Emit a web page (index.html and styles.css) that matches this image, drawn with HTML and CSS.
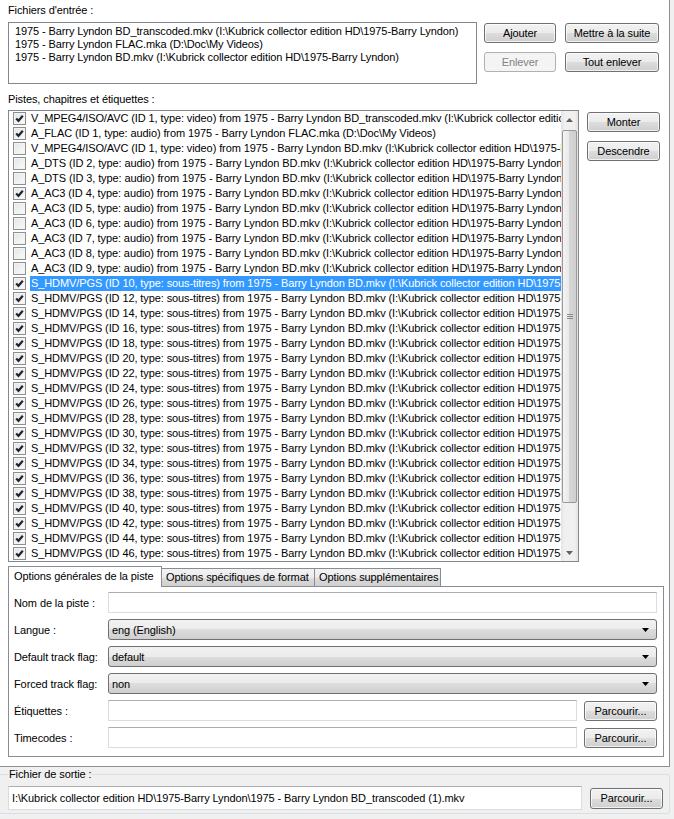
FILE: index.html
```html
<!DOCTYPE html>
<html lang="fr">
<head>
    <meta charset="UTF-8">
    <title>mkvmerge GUI</title>
    <link rel="stylesheet" href="styles.css">
</head>
<body>
    <div class="window">
        <div class="page">
            <div class="label">Fichiers d'entrée :</div>
            <div class="files-row">
                <div class="listbox files">
                    <div class="file">1975 - Barry Lyndon BD_transcoded.mkv (I:\Kubrick collector edition HD\1975-Barry Lyndon)</div>
                    <div class="file">1975 - Barry Lyndon FLAC.mka (D:\Doc\My Videos)</div>
                    <div class="file">1975 - Barry Lyndon BD.mkv (I:\Kubrick collector edition HD\1975-Barry Lyndon)</div>
                </div>
                <div class="file-buttons">
                    <button class="btn">Ajouter</button>
                    <button class="btn">Mettre à la suite</button>
                    <button class="btn" disabled>Enlever</button>
                    <button class="btn">Tout enlever</button>
                </div>
            </div>

            <div class="label tracks-label">Pistes, chapitres et étiquettes :</div>
            <div class="tracks-row">
                <div class="listbox tracks">
                    <div class="track-items">
                        <div class="track"><span class="check on"></span><span class="name">V_MPEG4/ISO/AVC (ID 1, type: video) from 1975 - Barry Lyndon BD_transcoded.mkv (I:\Kubrick collector edition HD\1975-Barry Lyndon)</span></div>
                        <div class="track"><span class="check on"></span><span class="name">A_FLAC (ID 1, type: audio) from 1975 - Barry Lyndon FLAC.mka (D:\Doc\My Videos)</span></div>
                        <div class="track"><span class="check"></span><span class="name">V_MPEG4/ISO/AVC (ID 1, type: video) from 1975 - Barry Lyndon BD.mkv (I:\Kubrick collector edition HD\1975-Barry Lyndon)</span></div>
                        <div class="track"><span class="check"></span><span class="name">A_DTS (ID 2, type: audio) from 1975 - Barry Lyndon BD.mkv (I:\Kubrick collector edition HD\1975-Barry Lyndon)</span></div>
                        <div class="track"><span class="check"></span><span class="name">A_DTS (ID 3, type: audio) from 1975 - Barry Lyndon BD.mkv (I:\Kubrick collector edition HD\1975-Barry Lyndon)</span></div>
                        <div class="track"><span class="check on"></span><span class="name">A_AC3 (ID 4, type: audio) from 1975 - Barry Lyndon BD.mkv (I:\Kubrick collector edition HD\1975-Barry Lyndon)</span></div>
                        <div class="track"><span class="check"></span><span class="name">A_AC3 (ID 5, type: audio) from 1975 - Barry Lyndon BD.mkv (I:\Kubrick collector edition HD\1975-Barry Lyndon)</span></div>
                        <div class="track"><span class="check"></span><span class="name">A_AC3 (ID 6, type: audio) from 1975 - Barry Lyndon BD.mkv (I:\Kubrick collector edition HD\1975-Barry Lyndon)</span></div>
                        <div class="track"><span class="check"></span><span class="name">A_AC3 (ID 7, type: audio) from 1975 - Barry Lyndon BD.mkv (I:\Kubrick collector edition HD\1975-Barry Lyndon)</span></div>
                        <div class="track"><span class="check"></span><span class="name">A_AC3 (ID 8, type: audio) from 1975 - Barry Lyndon BD.mkv (I:\Kubrick collector edition HD\1975-Barry Lyndon)</span></div>
                        <div class="track"><span class="check"></span><span class="name">A_AC3 (ID 9, type: audio) from 1975 - Barry Lyndon BD.mkv (I:\Kubrick collector edition HD\1975-Barry Lyndon)</span></div>
                        <div class="track selected"><span class="check on"></span><span class="name">S_HDMV/PGS (ID 10, type: sous-titres) from 1975 - Barry Lyndon BD.mkv (I:\Kubrick collector edition HD\1975-Barry Lyndon)</span></div>
                        <div class="track"><span class="check on"></span><span class="name">S_HDMV/PGS (ID 12, type: sous-titres) from 1975 - Barry Lyndon BD.mkv (I:\Kubrick collector edition HD\1975-Barry Lyndon)</span></div>
                        <div class="track"><span class="check on"></span><span class="name">S_HDMV/PGS (ID 14, type: sous-titres) from 1975 - Barry Lyndon BD.mkv (I:\Kubrick collector edition HD\1975-Barry Lyndon)</span></div>
                        <div class="track"><span class="check on"></span><span class="name">S_HDMV/PGS (ID 16, type: sous-titres) from 1975 - Barry Lyndon BD.mkv (I:\Kubrick collector edition HD\1975-Barry Lyndon)</span></div>
                        <div class="track"><span class="check on"></span><span class="name">S_HDMV/PGS (ID 18, type: sous-titres) from 1975 - Barry Lyndon BD.mkv (I:\Kubrick collector edition HD\1975-Barry Lyndon)</span></div>
                        <div class="track"><span class="check on"></span><span class="name">S_HDMV/PGS (ID 20, type: sous-titres) from 1975 - Barry Lyndon BD.mkv (I:\Kubrick collector edition HD\1975-Barry Lyndon)</span></div>
                        <div class="track"><span class="check on"></span><span class="name">S_HDMV/PGS (ID 22, type: sous-titres) from 1975 - Barry Lyndon BD.mkv (I:\Kubrick collector edition HD\1975-Barry Lyndon)</span></div>
                        <div class="track"><span class="check on"></span><span class="name">S_HDMV/PGS (ID 24, type: sous-titres) from 1975 - Barry Lyndon BD.mkv (I:\Kubrick collector edition HD\1975-Barry Lyndon)</span></div>
                        <div class="track"><span class="check on"></span><span class="name">S_HDMV/PGS (ID 26, type: sous-titres) from 1975 - Barry Lyndon BD.mkv (I:\Kubrick collector edition HD\1975-Barry Lyndon)</span></div>
                        <div class="track"><span class="check on"></span><span class="name">S_HDMV/PGS (ID 28, type: sous-titres) from 1975 - Barry Lyndon BD.mkv (I:\Kubrick collector edition HD\1975-Barry Lyndon)</span></div>
                        <div class="track"><span class="check on"></span><span class="name">S_HDMV/PGS (ID 30, type: sous-titres) from 1975 - Barry Lyndon BD.mkv (I:\Kubrick collector edition HD\1975-Barry Lyndon)</span></div>
                        <div class="track"><span class="check on"></span><span class="name">S_HDMV/PGS (ID 32, type: sous-titres) from 1975 - Barry Lyndon BD.mkv (I:\Kubrick collector edition HD\1975-Barry Lyndon)</span></div>
                        <div class="track"><span class="check on"></span><span class="name">S_HDMV/PGS (ID 34, type: sous-titres) from 1975 - Barry Lyndon BD.mkv (I:\Kubrick collector edition HD\1975-Barry Lyndon)</span></div>
                        <div class="track"><span class="check on"></span><span class="name">S_HDMV/PGS (ID 36, type: sous-titres) from 1975 - Barry Lyndon BD.mkv (I:\Kubrick collector edition HD\1975-Barry Lyndon)</span></div>
                        <div class="track"><span class="check on"></span><span class="name">S_HDMV/PGS (ID 38, type: sous-titres) from 1975 - Barry Lyndon BD.mkv (I:\Kubrick collector edition HD\1975-Barry Lyndon)</span></div>
                        <div class="track"><span class="check on"></span><span class="name">S_HDMV/PGS (ID 40, type: sous-titres) from 1975 - Barry Lyndon BD.mkv (I:\Kubrick collector edition HD\1975-Barry Lyndon)</span></div>
                        <div class="track"><span class="check on"></span><span class="name">S_HDMV/PGS (ID 42, type: sous-titres) from 1975 - Barry Lyndon BD.mkv (I:\Kubrick collector edition HD\1975-Barry Lyndon)</span></div>
                        <div class="track"><span class="check on"></span><span class="name">S_HDMV/PGS (ID 44, type: sous-titres) from 1975 - Barry Lyndon BD.mkv (I:\Kubrick collector edition HD\1975-Barry Lyndon)</span></div>
                        <div class="track"><span class="check on"></span><span class="name">S_HDMV/PGS (ID 46, type: sous-titres) from 1975 - Barry Lyndon BD.mkv (I:\Kubrick collector edition HD\1975-Barry Lyndon)</span></div>
                    </div>
                    <div class="scrollbar">
                        <div class="arrow"><svg width="7" height="4" viewBox="0 0 7 4"><polygon points="0,4 7,4 3.5,0" fill="#606060"/></svg></div>
                        <div class="scroll-track">
                            <div class="thumb"><div class="grip"></div></div>
                        </div>
                        <div class="arrow"><svg width="7" height="4" viewBox="0 0 7 4"><polygon points="0,0 7,0 3.5,4" fill="#606060"/></svg></div>
                    </div>
                </div>
                <div class="track-buttons">
                    <button class="btn">Monter</button>
                    <button class="btn">Descendre</button>
                </div>
            </div>

            <div class="tabs">
                <div class="tab-bar">
                    <div class="tab active">Options générales de la piste</div>
                    <div class="tab">Options spécifiques de format</div>
                    <div class="tab">Options supplémentaires</div>
                </div>
                <div class="tab-pane">
                    <div class="form-row">
                        <div class="form-label">Nom de la piste :</div>
                        <div class="input"></div>
                    </div>
                    <div class="form-row">
                        <div class="form-label">Langue :</div>
                        <div class="combo"><span>eng (English)</span><svg width="7" height="4" viewBox="0 0 7 4"><polygon points="0,0 7,0 3.5,4" fill="#000"/></svg></div>
                    </div>
                    <div class="form-row">
                        <div class="form-label">Default track flag:</div>
                        <div class="combo"><span>default</span><svg width="7" height="4" viewBox="0 0 7 4"><polygon points="0,0 7,0 3.5,4" fill="#000"/></svg></div>
                    </div>
                    <div class="form-row">
                        <div class="form-label">Forced track flag:</div>
                        <div class="combo"><span>non</span><svg width="7" height="4" viewBox="0 0 7 4"><polygon points="0,0 7,0 3.5,4" fill="#000"/></svg></div>
                    </div>
                    <div class="form-row">
                        <div class="form-label">Étiquettes :</div>
                        <div class="input"></div>
                        <button class="btn browse">Parcourir...</button>
                    </div>
                    <div class="form-row">
                        <div class="form-label">Timecodes :</div>
                        <div class="input"></div>
                        <button class="btn browse">Parcourir...</button>
                    </div>
                </div>
            </div>
        </div>

        <fieldset class="output">
            <legend>Fichier de sortie :</legend>
            <div class="output-row">
                <div class="input output-path">I:\Kubrick collector edition HD\1975-Barry Lyndon\1975 - Barry Lyndon BD_transcoded (1).mkv</div>
                <button class="btn browse">Parcourir...</button>
            </div>
        </fieldset>
    </div>
</body>
</html>
```

FILE: styles.css
```css
body {
    margin: 0;
    font-family: "Liberation Sans", Arial, sans-serif;
    font-size: 11px;
    letter-spacing: -0.1px;
    color: #000;
    background-color: #fff;
}
.window {
    width: 674px;
    height: 819px;
    overflow: hidden;
    background-color: #f0f0f0;
}
.page {
    box-sizing: border-box;
    width: 670px;
    height: 767px;
    padding: 3px 0 0 8px;
    border-right: 1px solid #8e8f8f;
    border-bottom: 1px solid #8e8f8f;
    background-color: #fff;
}
.label {
    height: 15px;
    line-height: 15px;
    white-space: nowrap;
}
.tracks-label {
    margin-top: 8px;
}
.btn {
    box-sizing: border-box;
    height: 20px;
    padding: 0;
    font-family: inherit;
    font-size: 11px;
    letter-spacing: -0.1px;
    color: #000;
    border: 1px solid #707070;
    border-radius: 3px;
    background: linear-gradient(#f2f2f2, #ebebeb 50%, #dddddd 50%, #cfcfcf);
    box-shadow: inset 0 0 0 1px rgba(255, 255, 255, 0.7);
    white-space: nowrap;
}
.btn:disabled {
    color: #838383;
    border-color: #adb2b5;
    background: #f4f4f4;
    box-shadow: none;
}
.listbox {
    box-sizing: border-box;
    border: 1px solid #828790;
    background-color: #fff;
    overflow: hidden;
}

/* input files */
.files-row {
    display: flex;
    margin-top: 4px;
}
.files {
    width: 469px;
    height: 62px;
    padding: 2px 0 0 6px;
}
.file {
    line-height: 13px;
    white-space: nowrap;
}
.file-buttons {
    display: grid;
    grid-template-columns: 72px 94px;
    grid-template-rows: 20px 20px;
    column-gap: 9px;
    row-gap: 9px;
    margin: 1px 0 0 7px;
}

/* tracks */
.tracks-row {
    display: flex;
    margin-top: 3px;
}
.tracks {
    display: flex;
    width: 571px;
    height: 452px;
}
.track-items {
    flex: 1;
    min-width: 0;
    overflow: hidden;
}
.track {
    display: flex;
    align-items: center;
    height: 15px;
    padding-left: 4px;
}
.check {
    box-sizing: border-box;
    flex: none;
    width: 13px;
    height: 13px;
    border: 1px solid #8e8f8f;
    background: linear-gradient(135deg, #e4e4e4, #fbfbfb);
    box-shadow: inset 0 0 0 1px #f4f4f4;
}
.check.on {
    background: url("data:image/svg+xml,%3Csvg xmlns='http://www.w3.org/2000/svg' width='11' height='11'%3E%3Cpath d='M2.2 5.4 L4.5 7.8 L8.8 2.8' fill='none' stroke='%23202530' stroke-width='2.2'/%3E%3C/svg%3E") center no-repeat, linear-gradient(135deg, #e4e4e4, #fbfbfb);
}
.name {
    flex: 1;
    min-width: 0;
    height: 15px;
    line-height: 15px;
    margin-left: 4px;
    padding-left: 1px;
    white-space: nowrap;
    overflow: hidden;
}
.selected .name {
    background-color: #3399ff;
    color: #fff;
}
.scrollbar {
    display: flex;
    flex-direction: column;
    flex: none;
    width: 17px;
    background: linear-gradient(to right, #e3e3e3, #f0f0f0 20%, #f0f0f0 80%, #e3e3e3);
}
.arrow {
    height: 17px;
    display: flex;
    align-items: center;
    justify-content: center;
}
.scroll-track {
    flex: 1;
    padding-top: 2px;
}
.thumb {
    box-sizing: border-box;
    height: 373px;
    margin: 0 1px;
    border: 1px solid #999;
    border-radius: 2px;
    background: linear-gradient(to right, #f4f4f4, #e8e8e8 50%, #d6d6d6 50%, #cfcfcf);
    display: flex;
    align-items: center;
    justify-content: center;
}
.grip {
    width: 6px;
    height: 5px;
    background: repeating-linear-gradient(#8a8a8a 0 1px, transparent 1px 2px);
}
.track-buttons {
    display: flex;
    flex-direction: column;
    gap: 9px;
    margin: 2px 0 0 8px;
}
.track-buttons .btn {
    width: 73px;
}

/* tabs */
.tabs {
    margin-top: 4px;
    width: 656px;
}
.tab-bar {
    display: flex;
    align-items: flex-end;
    height: 20px;
    padding-left: 1px;
}
.tab {
    box-sizing: border-box;
    height: 18px;
    line-height: 16px;
    padding-left: 4px;
    border: 1px solid #898c95;
    border-left: none;
    border-bottom: none;
    background: linear-gradient(#f2f2f2, #ebebeb 50%, #dddddd 50%, #cfcfcf);
    white-space: nowrap;
    width: 153px;
}
.tab:nth-child(3) {
    width: 126px;
}
.tab.active {
    height: 21px;
    margin-bottom: -1px;
    margin-left: -1px;
    line-height: 19px;
    padding-left: 5px;
    border-left: 1px solid #898c95;
    background: #fff;
    width: 154px;
}
.tab-pane {
    box-sizing: border-box;
    height: 171px;
    padding: 5px 6px 0 5px;
    border: 1px solid #898c95;
    background-color: #fff;
    display: flex;
    flex-direction: column;
    gap: 6px;
}
.form-row {
    display: flex;
    align-items: center;
    height: 21px;
}
.form-label {
    width: 94px;
    flex: none;
    white-space: nowrap;
}
.input {
    box-sizing: border-box;
    flex: 1;
    height: 21px;
    border: 1px solid #d9dce1;
    border-top-color: #abadb3;
    background-color: #fff;
}
.combo {
    box-sizing: border-box;
    flex: 1;
    height: 21px;
    display: flex;
    align-items: center;
    justify-content: space-between;
    padding: 0 7px 0 3px;
    border: 1px solid #707070;
    border-radius: 3px;
    background: linear-gradient(#f2f2f2, #ebebeb 50%, #dddddd 50%, #cfcfcf);
}
.browse {
    width: 73px;
    margin-left: 7px;
    flex: none;
}

/* output file */
.output {
    box-sizing: border-box;
    width: 671px;
    height: 47px;
    margin: 0 0 0 -1px;
    padding: 0 0 0 8px;
    border: 1px solid #d5dfe5;
    border-radius: 3px;
    background-color: #f0f0f0;
}
.output legend {
    padding: 0 1px;
    line-height: 15px;
}
.output-row {
    display: flex;
    align-items: center;
    margin-top: 4px;
}
.output-path {
    flex: none;
    width: 574px;
    height: 24px;
    line-height: 22px;
    padding-left: 3px;
    white-space: nowrap;
    overflow: hidden;
}
.output-row .browse {
    height: 21px;
    margin-left: 8px;
}
```
